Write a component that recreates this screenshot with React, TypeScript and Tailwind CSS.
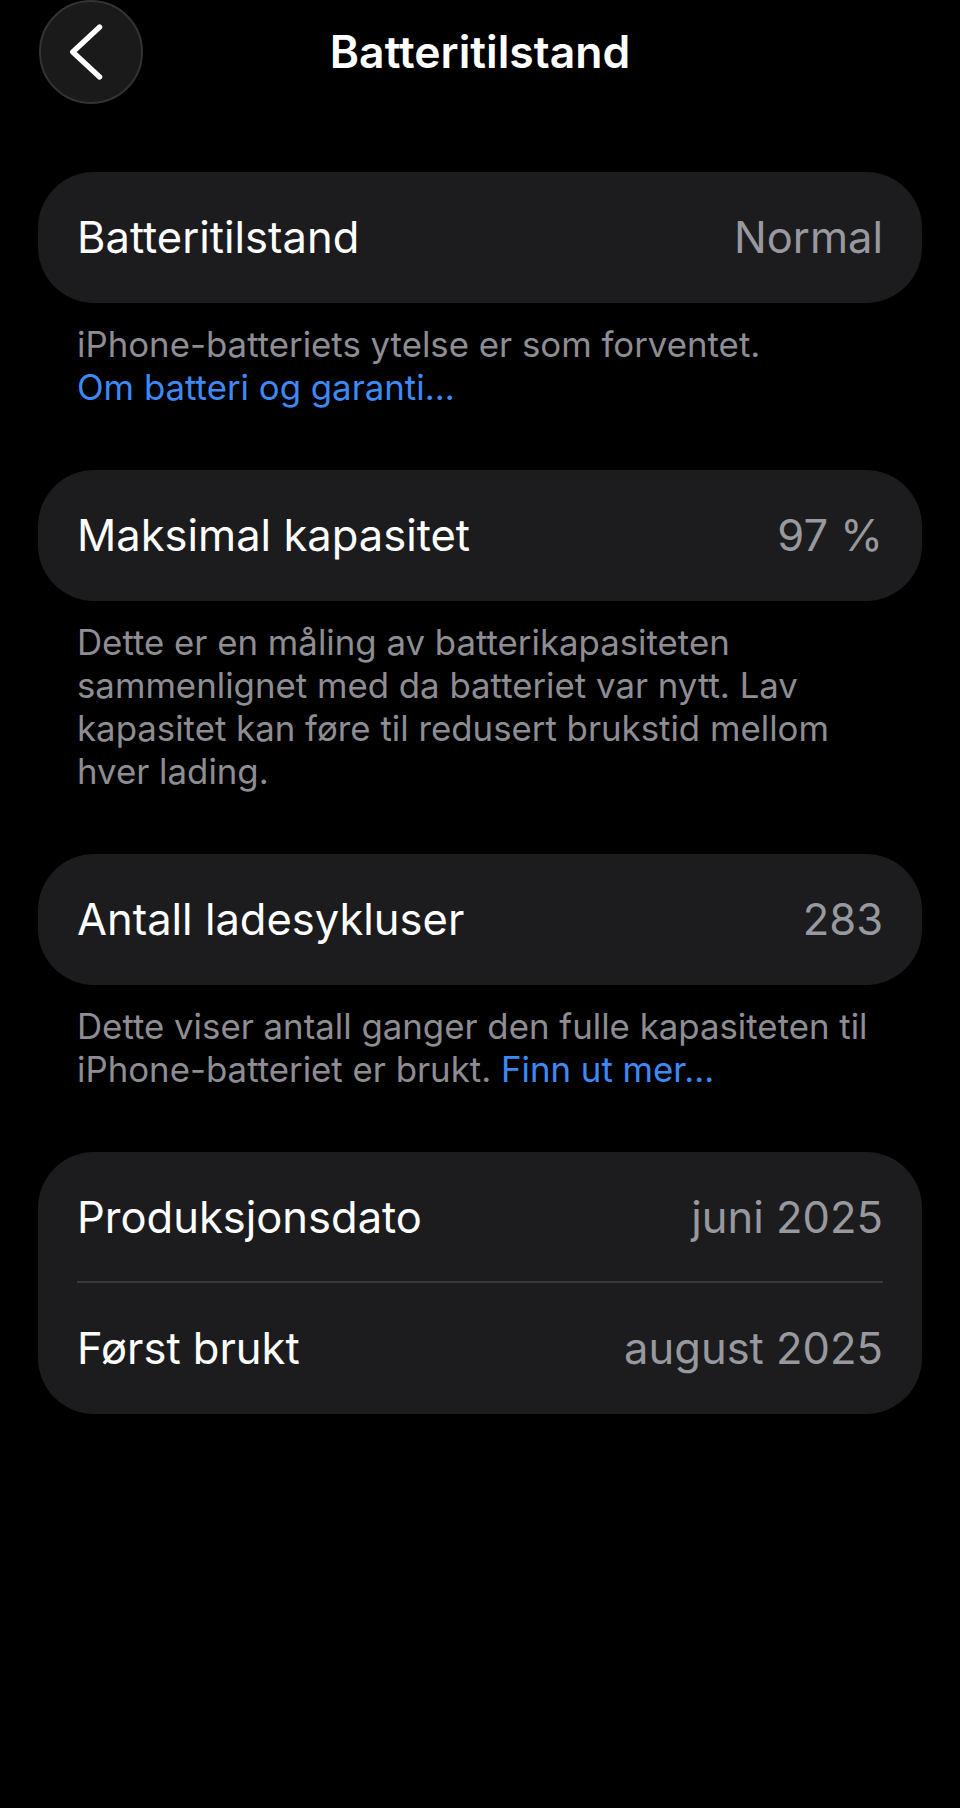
const font = { fontFamily: 'Inter, "Noto Sans", sans-serif' }

function Row({ label, value, divider }: { label: string; value: string; divider?: boolean }) {
  return (
    <div className="relative flex h-[131px] items-center justify-between px-[39px]">
      <span className="text-[43.5px] text-white">{label}</span>
      <span className="text-[43.5px] text-[#98989f]">{value}</span>
      {divider && <div className="absolute bottom-0 left-[39px] right-[39px] h-[2px] bg-[#38383b]" />}
    </div>
  )
}

function Card({ children }: { children: React.ReactNode }) {
  return <div className="rounded-[56px] bg-[#1c1c1e]">{children}</div>
}

function Footer({ children }: { children: React.ReactNode }) {
  return (
    <p className="mb-[61px] px-[39px] pt-[20px] text-[34.8px] leading-[43px] text-[#8d8d93]">
      {children}
    </p>
  )
}

export default function App() {
  return (
    <div className="min-h-[1808px] bg-black" style={font}>
      <header className="relative flex h-[104px] items-center justify-center">
        <button className="absolute left-[39px] top-0 size-[104px] rounded-full border-2 border-[#333335] bg-[#1a1a1b]">
          <svg viewBox="0 0 104 104" className="size-full">
            <path
              d="M61 26 L33 52 L61 78"
              fill="none"
              stroke="white"
              strokeWidth="5.5"
              strokeLinecap="round"
              strokeLinejoin="round"
            />
          </svg>
        </button>
        <h1 className="text-[44.5px] font-semibold text-white">Batteritilstand</h1>
      </header>

      <main className="px-[38px] pt-[68px]">
        <Card>
          <Row label="Batteritilstand" value="Normal" />
        </Card>
        <Footer>
          iPhone-batteriets ytelse er som forventet.
          <br />
          <span className="text-[#3d8af7]">Om batteri og garanti...</span>
        </Footer>

        <Card>
          <Row label="Maksimal kapasitet" value="97 %" />
        </Card>
        <Footer>
          Dette er en måling av batterikapasiteten
          <br />
          sammenlignet med da batteriet var nytt. Lav
          <br />
          kapasitet kan føre til redusert brukstid mellom
          <br />
          hver lading.
        </Footer>

        <Card>
          <Row label="Antall ladesykluser" value="283" />
        </Card>
        <Footer>
          Dette viser antall ganger den fulle kapasiteten til
          <br />
          iPhone-batteriet er brukt. <span className="text-[#3d8af7]">Finn ut mer...</span>
        </Footer>

        <Card>
          <Row label="Produksjonsdato" value="juni 2025" divider />
          <Row label="Først brukt" value="august 2025" />
        </Card>
      </main>
    </div>
  )
}
